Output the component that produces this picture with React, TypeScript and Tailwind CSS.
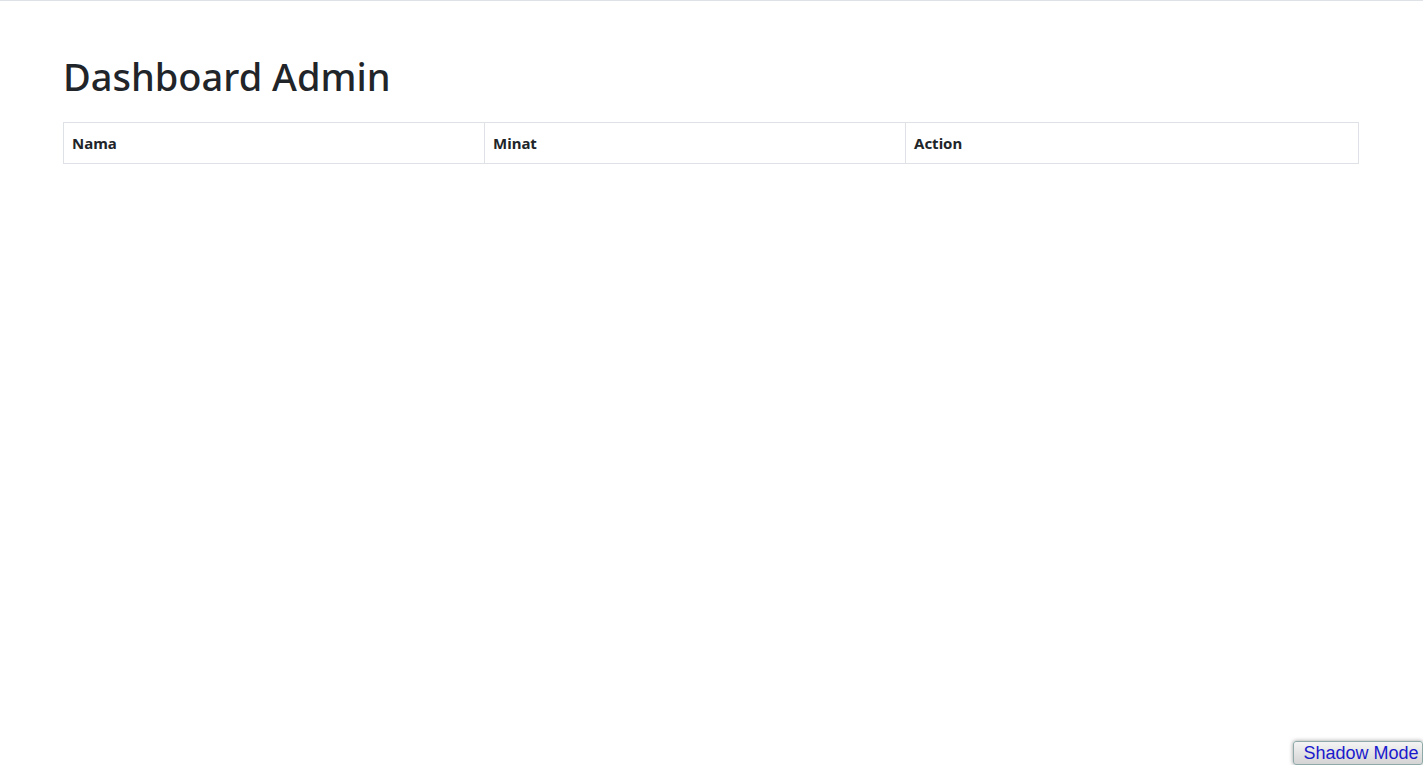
export default function App() {
  return (
    <div className="relative min-h-[765px] bg-white text-[#212529]" style={{ fontFamily: '"Noto Sans", "Open Sans", sans-serif' }}>
      <div className="h-[2px] w-full border-t border-[#dee2e6]" />
      <div className="ml-[51px] w-[1320px] px-[12px] pt-[50px]">
        <h1 className="mb-[22px] text-[38px] font-medium leading-[48px]">Dashboard Admin</h1>
        <table className="w-full border-collapse border border-[#dee2e6]">
          <thead>
            <tr>
              <th className="w-[421px] border border-[#dee2e6] p-[8px] text-left text-[15px] font-bold leading-[24px]">Nama</th>
              <th className="w-[421px] border border-[#dee2e6] p-[8px] text-left text-[15px] font-bold leading-[24px]">Minat</th>
              <th className="border border-[#dee2e6] p-[8px] text-left text-[15px] font-bold leading-[24px]">Action</th>
            </tr>
          </thead>
          <tbody></tbody>
        </table>
      </div>
      <button
        className="absolute bottom-0 right-0 h-[24px] w-[130px] rounded-[3px] border border-[#8fa9a9] bg-gradient-to-b from-[#f4f4f4] to-[#d4d4d4] pl-[6px] text-[18px] leading-[20px] text-[#1a1acc] shadow-[0_0_4px_rgba(0,0,0,0.4)]"
        style={{ fontFamily: '"Liberation Sans", Arial, sans-serif' }}
      >
        Shadow Mode
      </button>
    </div>
  );
}
